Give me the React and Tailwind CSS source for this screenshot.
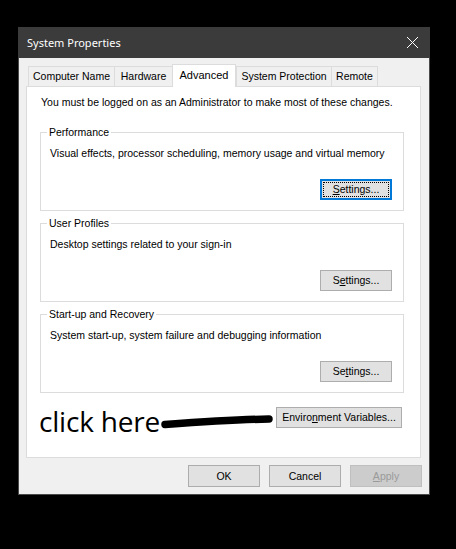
import React from 'react';

const ui = { fontFamily: '"Liberation Sans", Arial, sans-serif' };

function Btn({ children, className = '' }) {
  return (
    <button
      className={`h-[21px] border border-[#adadad] bg-[#e1e1e1] text-[10.5px] text-black leading-none flex items-center justify-center ${className}`}
      style={ui}
    >
      {children}
    </button>
  );
}

function Group({ title, desc, focused, button }) {
  return (
    <fieldset className="border border-[#dcdcdc] w-[364px] pb-[10px] mt-[5px] first:mt-0">
      <legend className="ml-[6px] px-[2px] text-[10.5px] leading-[14px] text-black" style={ui}>{title}</legend>
      <p className="mt-[7px] pl-[9px] text-[10.5px] leading-[14px] text-black" style={ui}>{desc}</p>
      <div className="mt-[19px] flex justify-end pr-[11px]">
        {focused ? (
          <button className="h-[21px] w-[72px] border-2 border-[#0078d7] bg-[#e1e1e1] p-px">
            <span className="h-full w-full flex items-center justify-center border border-dotted border-black text-[10.5px] leading-none text-black" style={ui}>
              {button}
            </span>
          </button>
        ) : (
          <Btn className="w-[72px]">{button}</Btn>
        )}
      </div>
    </fieldset>
  );
}

const tabs = [
  { name: 'Computer Name', w: 'w-[86px]' },
  { name: 'Hardware', w: 'w-[58px]' },
  { name: 'Advanced', w: 'w-[64px]', active: true },
  { name: 'System Protection', w: 'w-[95px]' },
  { name: 'Remote', w: 'w-[47px]' },
];

export default function App() {
  return (
    <div className="w-[456px] h-[549px] bg-black pt-[27px] pl-[18px]">
      <div className="w-[412px] h-[468px] flex flex-col bg-[#f0f0f0] border-x border-b border-[#4a4a4a]">
        {/* Title bar */}
        <div className="h-[31px] -mx-px bg-[#3b3b3b] flex items-center justify-between pl-[9px] pr-[11px]">
          <span className="text-white text-[11px] leading-none" style={{ fontFamily: '"Noto Sans", "Open Sans", sans-serif' }}>
            System Properties
          </span>
          <svg width="13" height="13" viewBox="0 0 13 13" fill="none" stroke="#ffffff" strokeWidth="1">
            <path d="M1 1L12 12M12 1L1 12" />
          </svg>
        </div>

        <div className="pl-[7px]">
          {/* Tabs */}
          <div className="mt-[6px] h-[22px] flex items-end pl-[2px]">
            {tabs.map((t, i) => (
              <div
                key={t.name}
                className={
                  t.active
                    ? `${t.w} h-[23px] -mb-px relative z-10 bg-white border-t border-x border-[#dcdcdc] flex items-center justify-center pb-[2px] text-[11px] text-black`
                    : `${t.w} h-[20px] bg-[#f0f0f0] border-t border-l border-[#dcdcdc] ${i === tabs.length - 1 ? 'border-r' : ''} flex items-center justify-center text-[10.5px] text-black`
                }
                style={ui}
              >
                {t.name}
              </div>
            ))}
          </div>

          {/* Panel */}
          <div className="w-[395px] h-[372px] bg-white border border-[#dcdcdc]">
            <p className="pt-[8px] pl-[14px] text-[10.5px] leading-[14px] text-black" style={ui}>
              You must be logged on as an Administrator to make most of these changes.
            </p>

            <div className="mt-[16px] pl-[13px] flex flex-col">
              <Group
                title="Performance"
                desc="Visual effects, processor scheduling, memory usage and virtual memory"
                focused
                button={<><span className="underline">S</span>ettings...</>}
              />
              <Group
                title="User Profiles"
                desc="Desktop settings related to your sign-in"
                button={<>S<span className="underline">e</span>ttings...</>}
              />
              <Group
                title="Start-up and Recovery"
                desc="System start-up, system failure and debugging information"
                button={<>Se<span className="underline">t</span>tings...</>}
              />
            </div>

            <div className="mt-[14px] pl-[12px] pr-[18px] flex items-start">
              <span className="shrink-0 whitespace-nowrap text-[28px] leading-[28px] tracking-[-0.2px] text-black" style={{ fontFamily: '"Open Sans", "Noto Sans", sans-serif' }}>
                click here
              </span>
              <svg width="116" height="28" viewBox="0 0 116 28" className="shrink-0">
                <path d="M5 17.5 C 40 15, 80 12.5, 109 12" stroke="#000" strokeWidth="7.5" strokeLinecap="round" fill="none" />
              </svg>
              <Btn className="ml-auto shrink-0 w-[126px]">
                Enviro<span className="underline">n</span>ment Variables...
              </Btn>
            </div>
          </div>

          {/* Bottom buttons */}
          <div className="mt-[7px] flex justify-end gap-[9px] pr-[7px]">
            <Btn className="w-[72px] h-[22px]">OK</Btn>
            <Btn className="w-[72px] h-[22px]">Cancel</Btn>
            <button
              className="w-[72px] h-[22px] border border-[#bfbfbf] bg-[#cccccc] text-[10.5px] leading-none text-[#9a9a9a] flex items-center justify-center"
              style={ui}
            >
              <span><span className="underline">A</span>pply</span>
            </button>
          </div>
        </div>
      </div>
    </div>
  );
}
